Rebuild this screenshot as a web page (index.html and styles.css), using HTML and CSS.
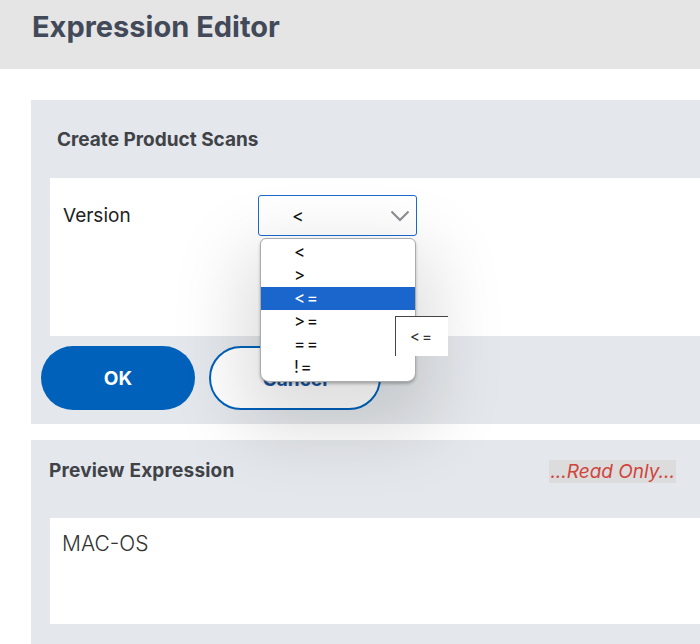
FILE: index.html
```html
<!DOCTYPE html>
<html>
<head>
<meta charset="utf-8">
<link rel="stylesheet" href="styles.css">
</head>
<body>
<header class="topbar"><h1 class="title">Expression Editor</h1></header>
<main class="main">
  <section class="panel panel-create">
    <h2 class="panel-title">Create Product Scans</h2>
    <div class="card">
      <label class="field-label">Version</label>
      <div class="select-wrap">
        <div class="select">
          <span class="select-value">&lt;</span>
          <svg class="chevron" width="20" height="12" viewBox="0 0 20 12"><path d="M1.5 1.5 L10 10 L18.5 1.5" fill="none" stroke="#8a8d93" stroke-width="2"/></svg>
        </div>
        <ul class="dropdown">
          <li class="opt">&lt;</li>
          <li class="opt">&gt;</li>
          <li class="opt opt-active">&lt;=</li>
          <li class="opt">&gt;=</li>
          <li class="opt">==</li>
          <li class="opt">!=</li>
        </ul>
        <div class="tooltip">&lt;=</div>
      </div>
    </div>
    <div class="actions">
      <button class="btn btn-ok">OK</button>
      <button class="btn btn-cancel">Cancel</button>
    </div>
  </section>
  <section class="panel panel-preview">
    <div class="preview-head">
      <h2 class="panel-title preview-title">Preview Expression</h2>
      <span class="readonly">...Read Only...</span>
    </div>
    <div class="preview-box">MAC-OS</div>
  </section>
</main>
</body>
</html>
```
FILE: styles.css
```css
* { box-sizing: border-box; }
html, body { margin: 0; padding: 0; }
body {
  font-family: Inter, "Noto Sans", "Liberation Sans", sans-serif;
  background: #ffffff;
  width: 700px;
  height: 644px;
  overflow: hidden;
}
.topbar {
  height: 69px;
  background: #e5e5e5;
  padding: 9px 0 0 32px;
}
.title {
  margin: 0;
  font-size: 29px;
  line-height: 36px;
  font-weight: 700;
  color: #424959;
}
.main {
  padding: 31px 0 0 31px;
  display: flex;
  flex-direction: column;
  gap: 16px;
}
.panel {
  background: #e4e7eb;
}
.panel-create {
  height: 324px;
  padding: 28px 0 0 0;
}
.panel-title {
  margin: 0;
  font-size: 19px;
  line-height: 24px;
  font-weight: 700;
  color: #3f4247;
}
.panel-create .panel-title { padding-left: 26px; }
.card {
  margin: 26px 0 0 19px;
  height: 158px;
  background: #ffffff;
  display: flex;
  align-items: flex-start;
  padding: 17px 0 0 13px;
}
.field-label {
  font-size: 19px;
  line-height: 42px;
  color: #222222;
  width: 195px;
}
.select-wrap {
  position: relative;
}
.select {
  width: 159px;
  height: 41px;
  border: 1px solid #1a6ad0;
  border-radius: 3px;
  background: #fff;
  display: flex;
  align-items: center;
  padding-left: 33px;
  position: relative;
}
.select-value {
  font-size: 18px;
  color: #111;
}
.chevron {
  position: absolute;
  right: 6px;
  top: 14px;
}
.dropdown {
  position: absolute;
  left: 2px;
  top: 43px;
  width: 156px;
  margin: 0;
  padding: 2px 0 2px 0;
  list-style: none;
  background: #fff;
  border: 1px solid #a9abae;
  border-radius: 6px 6px 9px 9px;
  box-shadow: 0 2px 3px rgba(0,0,0,0.25), 0 30px 70px 20px rgba(0,0,0,0.13);
  z-index: 5;
}
.opt {
  height: 23px;
  line-height: 23px;
  padding-left: 33px;
  font-size: 17px;
  letter-spacing: 1.5px;
  color: #111;
}
.opt-active {
  background: #1a66cc;
  color: #ffffff;
}
.tooltip {
  position: absolute;
  left: 137px;
  top: 121px;
  width: 53px;
  height: 40px;
  background: #fff;
  border-top: 1px solid #444;
  border-left: 1px solid #444;
  font-size: 15px;
  letter-spacing: 2px;
  color: #333;
  padding: 10px 0 0 14px;
  z-index: 6;
}
.actions {
  display: flex;
  gap: 14px;
  padding: 10px 0 0 10px;
}
.btn {
  height: 64px;
  border-radius: 32px;
  font-family: Inter, "Noto Sans", "Liberation Sans", sans-serif;
  font-size: 19px;
  font-weight: 700;
  cursor: pointer;
}
.btn-ok {
  width: 154px;
  background: #0061bb;
  border: none;
  color: #ffffff;
}
.btn-cancel {
  width: 172px;
  background: #ffffff;
  border: 2px solid #0061bb;
  color: #1a58a6;
  padding-top: 4px;
}
.panel-preview {
  height: 220px;
  padding: 19px 0 0 18px;
}
.preview-head {
  display: flex;
  align-items: center;
  height: 24px;
}
.preview-title {
  flex: 1;
  font-size: 19px;
  letter-spacing: 0.2px;
}
.readonly {
  margin-right: 24px;
  background: #dcdcdc;
  color: #d0443d;
  font-style: italic;
  font-size: 19px;
  line-height: 23px;
  padding: 0 1px;
}
.preview-box {
  margin: 35px 0 0 1px;
  height: 106px;
  background: #ffffff;
  padding: 12px 0 0 12px;
  font-size: 21px;
  font-weight: 300;
  color: #333;
  line-height: 28px;
}
```
